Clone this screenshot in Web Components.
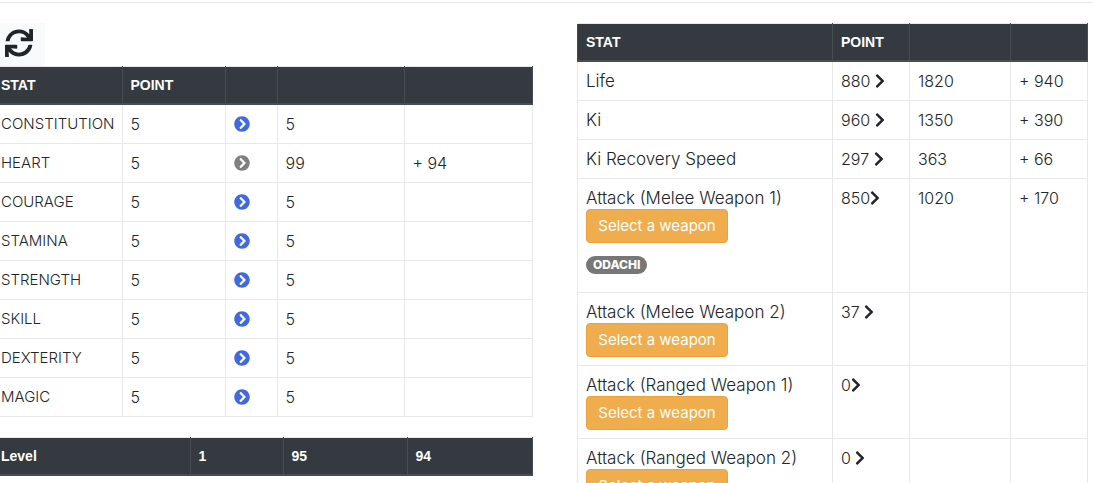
<!DOCTYPE html>
<html lang="en">
<head>
<meta charset="utf-8">
<title>Character stats</title>
<style>
  body { margin: 0; background: #fff; color: #212529; font: 300 16px/22px Inter, sans-serif; }
</style>
</head>
<body>
<stat-page>
  <refresh-button slot="build"></refresh-button>
  <attribute-table slot="build"></attribute-table>
  <level-table slot="build"></level-table>
  <derived-table slot="result"></derived-table>
</stat-page>

<script>
const tableStyles = `
  :host { display: block; }
  table { width: 100%; table-layout: fixed; border-collapse: collapse; }
  th, td { padding: 8px; border: 1px solid #e6e8ea; text-align: left; vertical-align: top; }
  td, tbody th { font-weight: 300; }
  tr.dark th, tr.dark td {
    height: 20px; padding: 8px;
    background: #343a40; color: #fff; border-color: #e6e8ea #454d55 #454d55; border-bottom-width: 2px;
    font: 700 14px/20px "Liberation Sans", Arial, sans-serif;
  }
`;
const bleedStyles = `
  tr > :first-child { border-left: 0; padding-left: 1px; }
  tr.dark > :first-child { border-left: 0; padding-left: 1px; }
`;
function define(name, markup) {
  customElements.define(name, class extends HTMLElement {
    constructor() {
      super();
      this.attachShadow({ mode: "open" }).innerHTML = typeof markup === "function" ? markup() : markup;
    }
  });
}
const cols = widths => `<colgroup>${widths.map(w => `<col style="width:${w}px">`).join("")}</colgroup>`;

define("stat-page", `
  <style>
    :host { display: block; height: 100vh; overflow: hidden; }
    header { height: 2px; border-bottom: 1px solid #e9eaec; }
    main { display: grid; grid-template-columns: 532fr 510fr; gap: 45px; padding: 20px 6px 0 0; }
    section { min-width: 0; }
  </style>
  <header></header>
  <main>
    <section><slot name="build"></slot></section>
    <section><slot name="result"></slot></section>
  </main>`);

define("refresh-button", `
  <style>
    :host { display: block; }
    button { display: block; width: 45px; height: 43px; padding: 5px 5px 8px; border: 0; background: #f8fbfe; color: #212529; }
    svg { display: block; width: 28px; height: 28px; fill: currentColor; }
  </style>
  <button type="button" aria-label="Reset"><svg viewBox="0 0 512 512"><path d="M440.65 12.57l4 82.77A247.16 247.16 0 0 0 255.83 8C134.73 8 33.91 94.92 12.29 209.82A12 12 0 0 0 24.09 224h49.05a12 12 0 0 0 11.67-9.26 175.91 175.91 0 0 1 317-56.94l-101.46-4.86a12 12 0 0 0-12.57 12v47.41a12 12 0 0 0 12 12H500a12 12 0 0 0 12-12V12a12 12 0 0 0-12-12h-47.37a12 12 0 0 0-11.98 12.57zM255.83 432a175.61 175.61 0 0 1-146-77.8l101.8 4.87a12 12 0 0 0 12.57-12v-47.4a12 12 0 0 0-12-12H12a12 12 0 0 0-12 12V500a12 12 0 0 0 12 12h47.35a12 12 0 0 0 12-12.6l-4.15-82.57A247.17 247.17 0 0 0 255.83 504c121.11 0 221.93-86.92 243.55-201.82a12 12 0 0 0-11.8-14.18h-49.05a12 12 0 0 0-11.67 9.26A175.86 175.86 0 0 1 255.83 432z"/></svg></button>`);

define("raise-button", `
  <style>
    :host { display: block; color: #4169e1; }
    :host([changed]) { color: #808080; }
    button { display: block; margin: 3px 0; padding: 0; border: 0; background: none; color: inherit; }
    svg { display: block; width: 16px; height: 16px; fill: currentColor; }
  </style>
  <button type="button" aria-label="Raise"><svg viewBox="0 0 512 512"><path d="M256 8c137 0 248 111 248 248S393 504 256 504 8 393 8 256 119 8 256 8zm113.900 231L234.400 103.500c-9.400-9.400-24.600-9.400-33.900 0l-17 17c-9.400 9.400-9.400 24.600 0 33.900L285.100 256 183.500 357.600c-9.400 9.400-9.400 24.600 0 33.900l17 17c9.400 9.400 24.600 9.400 33.900 0L369.900 273c9.400-9.400 9.400-24.600 0-34z"/></svg></button>`);

define("chevron-icon", `
  <style>
    :host { display: inline-block; vertical-align: top; padding: 3px 0; }
    svg { display: block; width: 10px; height: 16px; fill: currentColor; }
  </style>
  <svg viewBox="0 0 320 512" aria-hidden="true"><path d="M285.476 272.971L91.132 467.314c-9.373 9.373-24.569 9.373-33.941 0l-22.667-22.667c-9.357-9.357-9.375-24.522-.04-33.901L188.505 256 34.484 101.255c-9.335-9.379-9.317-24.544.04-33.901l22.667-22.667c9.373-9.373 24.569-9.373 33.941 0L285.475 239.030c9.373 9.372 9.373 24.568.001 33.941z"/></svg>`);

define("weapon-button", `
  <style>
    :host { display: block; }
    button { display: block; box-sizing: border-box; min-width: 142px; height: 34px; padding: 0 11px; border: 1px solid #eea236;
      border-radius: 4px; background: #f0ad4e; color: #fff; font: 400 15px/20px Inter, sans-serif; white-space: nowrap; }
  </style>
  <button type="button"><slot></slot></button>`);

define("pill-badge", `
  <style>
    :host { display: block; width: fit-content; margin: 13px 0 10px; padding: 0 7px; border-radius: 9px;
      background: #777; color: #fff; font: 800 12px/18px Inter, sans-serif; }
  </style>
  <slot></slot>`);

define("attribute-table", () => {
  const rows = ["CONSTITUTION", "HEART", "COURAGE", "STAMINA", "STRENGTH", "SKILL", "DEXTERITY", "MAGIC"].map(name => {
    const heart = name === "HEART";
    return `<tr><th scope="row">${name}</th><td>5</td><td><raise-button ${heart ? "changed" : ""}></raise-button></td><td>${heart ? 99 : 5}</td><td>${heart ? "+ 94" : ""}</td></tr>`;
  }).join("");
  return `<style>${tableStyles}${bleedStyles} tbody th { font-size: 15px; padding-right: 0; }</style>
    <table>${cols([122, 103, 52, 127, 128])}
      <thead><tr class="dark"><th>STAT</th><th>POINT</th><th></th><th></th><th></th></tr></thead>
      <tbody>${rows}</tbody></table>`;
});

define("level-table", `
  <style>${tableStyles}${bleedStyles} :host { margin-top: 20px; }</style>
  <table>${cols([190, 93, 124, 125])}
    <tbody><tr class="dark"><th scope="row">Level</th><td>1</td><td>95</td><td>94</td></tr></tbody></table>`);

define("derived-table", () => {
  const data = [
    { name: "Life", now: "880 ", next: "1820", gain: "+ 940" },
    { name: "Ki", now: "960 ", next: "1350", gain: "+ 390" },
    { name: "Ki Recovery Speed", now: "297 ", next: "363", gain: "+ 66" },
    { name: "Attack (Melee Weapon 1)", now: "850", next: "1020", gain: "+ 170", weapon: true, badge: "ODACHI" },
    { name: "Attack (Melee Weapon 2)", now: "37 ", weapon: true },
    { name: "Attack (Ranged Weapon 1)", now: "0", weapon: true },
    { name: "Attack (Ranged Weapon 2)", now: "0 ", weapon: true },
  ];
  const rows = data.map(d => `<tr><th scope="row">${d.name}${d.weapon ? "<weapon-button>Select a weapon</weapon-button>" : ""}${d.badge ? `<pill-badge>${d.badge}</pill-badge>` : ""}</th>
    <td>${d.now}<chevron-icon></chevron-icon></td><td>${d.next || ""}</td><td>${d.gain || ""}</td></tr>`).join("");
  return `<style>${tableStyles} tbody th { font-size: 17px; }</style>
    <table>${cols([255, 77, 101, 77])}
      <thead><tr class="dark"><th>STAT</th><th>POINT</th><th></th><th></th></tr></thead>
      <tbody>${rows}</tbody></table>`;
});
</script>
</body>
</html>
